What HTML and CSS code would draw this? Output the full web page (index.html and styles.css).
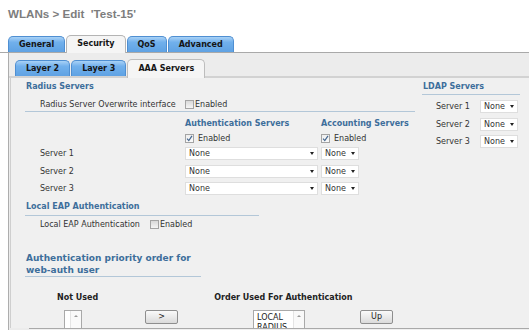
FILE: index.html
```html
<!DOCTYPE html>
<html lang="en">
<head>
    <meta charset="UTF-8">
    <title>WLANs &gt; Edit</title>
    <link rel="stylesheet" href="styles.css">
</head>
<body>
    <div class="page-title">WLANs &gt; Edit &nbsp;'Test-15'</div>

    <div class="tabs">
        <div class="tab">General</div>
        <div class="tab active">Security</div>
        <div class="tab">QoS</div>
        <div class="tab">Advanced</div>
    </div>

    <div class="panel">
        <div class="tabs sub">
            <div class="tab">Layer 2</div>
            <div class="tab">Layer 3</div>
            <div class="tab active">AAA Servers</div>
        </div>

        <div class="subpanel">
            <div class="cols">
                <div class="main">
                    <!-- Radius -->
                    <div class="section radius">
                        <div class="sec-head">Radius Servers</div>
                        <div class="row overwrite">
                            <span class="label wide">Radius Server Overwrite interface</span>
                            <span class="check"></span><span class="check-text tight">Enabled</span>
                        </div>
                    </div>

                    <div class="srv-grid">
                        <div></div>
                        <div class="col-head">Authentication Servers</div>
                        <div class="col-head">Accounting Servers</div>

                        <div></div>
                        <div class="row"><span class="check on"><svg width="7" height="7" viewBox="0 0 7 7"><path d="M1 3.6 L2.8 5.6 L6 0.8" fill="none" stroke="#45678f" stroke-width="1.2"/></svg></span><span class="check-text">Enabled</span></div>
                        <div class="row"><span class="check on"><svg width="7" height="7" viewBox="0 0 7 7"><path d="M1 3.6 L2.8 5.6 L6 0.8" fill="none" stroke="#45678f" stroke-width="1.2"/></svg></span><span class="check-text">Enabled</span></div>

                        <div class="label">Server 1</div>
                        <div class="select big">None</div>
                        <div class="select">None</div>

                        <div class="label">Server 2</div>
                        <div class="select big">None</div>
                        <div class="select">None</div>

                        <div class="label">Server 3</div>
                        <div class="select big">None</div>
                        <div class="select">None</div>
                    </div>

                    <!-- Local EAP -->
                    <div class="section eap">
                        <div class="sec-head">Local EAP Authentication</div>
                    </div>
                    <div class="row eap-row">
                        <span class="label">Local EAP Authentication</span>
                        <span class="check"></span><span class="check-text tight">Enabled</span>
                    </div>

                    <!-- Web auth priority -->
                    <div class="big-head">Authentication priority order for<br>web-auth user</div>

                    <div class="order-heads">
                        <span class="not-used">Not Used</span>
                        <span class="order-used">Order Used For Authentication</span>
                    </div>
                    <div class="order-ctrls">
                        <div class="listbox narrow">
                            <div class="items"></div>
                            <div class="scroll"></div>
                        </div>
                        <button class="btn move">&gt;</button>
                        <div class="listbox used">
                            <div class="items">LOCAL<br>RADIUS</div>
                            <div class="scroll"></div>
                        </div>
                        <button class="btn up">Up</button>
                    </div>
                </div>

                <div class="ldap">
                    <div class="sec-head ldap-head">LDAP Servers</div>
                    <div class="ldap-row"><span class="label">Server 1</span><div class="select">None</div></div>
                    <div class="ldap-row"><span class="label">Server 2</span><div class="select">None</div></div>
                    <div class="ldap-row"><span class="label">Server 3</span><div class="select">None</div></div>
                </div>
            </div>
        </div>
        <div class="frame-bottom"></div>
    </div>
</body>
</html>
```

FILE: styles.css
```css
/* General styles */
body {
    margin: 0;
    width: 529px;
    height: 330px;
    overflow: hidden;
    font-family: "DejaVu Sans", Verdana, sans-serif;
    font-size: 8px;
    color: #333;
    background: #fff;
}

.page-title {
    height: 35px;
    box-sizing: border-box;
    padding: 7px 8px 0;
    font-family: "Liberation Sans", Arial, sans-serif;
    font-weight: bold;
    font-size: 11.6px;
    line-height: 14px;
    color: #7d7d7d;
}

/* Tabs */
.tabs {
    display: flex;
    align-items: flex-end;
    height: 17px;
    padding-left: 8px;
    border-bottom: 1px solid #a9a9a9;
}

.tab {
    height: 15px;
    line-height: 15px;
    padding: 0 10px;
    margin-right: 1px;
    border: 1px solid #4f8fd2;
    border-bottom: none;
    border-radius: 5px 5px 0 0;
    background: linear-gradient(#a9d2f6, #71b0ec 35%, #5fa2e3);
    font-weight: bold;
    color: #151515;
}

.tab.active {
    height: 17px;
    line-height: 16px;
    margin-bottom: -1px;
    border-color: #b4b4b4;
    background: #f5f5f5;
}

.tabs.sub {
    height: 18px;
    padding: 5px 0 0 6px;
    border-bottom: 2px solid #d2d2d2;
}

.tabs.sub .tab.active {
    height: 18px;
    line-height: 17px;
    margin-bottom: -2px;
    border-color: #bdbdbd;
}

/* Panels */
.panel {
    margin-left: 8px;
    border-left: 1px solid #adadad;
    background: #ececec;
}

.subpanel {
    height: 250px;
    overflow: hidden;
    margin-left: 1px;
    border-left: 1px solid #cfcfcf;
    background: #f0f0f0;
}

.frame-bottom {
    height: 3px;
    margin-left: 20px;
    border-top: 1px solid #a9a9a9;
    background: #f0f0f0;
}

.cols {
    display: flex;
    padding: 2px 0 0 14px;
}

.main {
    width: 390px;
}

.ldap {
    width: 98px;
    margin-left: 7px;
}

/* Section headings */
.sec-head {
    height: 13px;
    line-height: 13px;
    padding-left: 1px;
    font-weight: bold;
    color: #3d6e9b;
    white-space: nowrap;
}

.section {
    border-bottom: 1px solid #b3c7d8;
}

.section.eap {
    width: 234px;
    margin-top: 2px;
}

.section.eap .sec-head {
    height: 15px;
}

.ldap-head {
    height: 14px;
    border-bottom: 1px solid #b3c7d8;
}

.row {
    display: flex;
    align-items: center;
    white-space: nowrap;
}

.label {
    color: #333;
    white-space: nowrap;
}

.label.wide {
    width: 145px;
}

.overwrite {
    padding: 4px 0 0 15px;
    height: 14px;
}

/* Checkboxes */
.check {
    display: inline-flex;
    align-items: center;
    justify-content: center;
    width: 9px;
    height: 9px;
    box-sizing: border-box;
    border: 1px solid #a4a4a4;
    background: linear-gradient(#d9d9d9, #f5f5f5);
}

.check.on {
    background: linear-gradient(#eeeeee, #fafafa);
}

.check-text {
    margin-left: 4px;
}

.check-text.tight {
    margin-left: 1px;
}

/* Server grid */
.srv-grid {
    display: grid;
    grid-template-columns: 145px 136px 95px;
    grid-template-rows: 16px 14px 17.5px 17.5px 17.5px;
    align-items: center;
    margin-top: 3px;
    padding-left: 15px;
}

.col-head {
    font-weight: bold;
    color: #3d6e9b;
    white-space: nowrap;
}

.select {
    display: flex;
    align-items: center;
    justify-content: space-between;
    width: 38px;
    height: 13px;
    box-sizing: border-box;
    padding: 0 3px 0 3px;
    border: 1px solid #dedede;
    background: #fff;
    color: #333;
}

.select::after {
    content: "";
    border-left: 2.5px solid transparent;
    border-right: 2.5px solid transparent;
    border-top: 3px solid #222;
}

.select.big {
    width: 133px;
}

/* Local EAP */
.eap-row {
    height: 14px;
    margin-top: 2px;
    padding-left: 15px;
}

.eap-row .label {
    margin-right: 10px;
}

/* Priority order */
.big-head {
    width: 176px;
    margin-top: 20px;
    font-size: 9px;
    line-height: 12px;
    font-weight: bold;
    color: #3d6e9b;
    padding-left: 1px;
    box-sizing: border-box;
    border-bottom: 1px solid #b3c7d8;
}

.order-heads {
    display: flex;
    height: 14px;
    line-height: 14px;
    margin-top: 14px;
    font-weight: bold;
    color: #222;
    white-space: nowrap;
}

.not-used {
    margin-left: 32px;
}

.order-used {
    margin-left: 116px;
}

.order-ctrls {
    display: flex;
    align-items: flex-start;
    margin-top: 5px;
}

.listbox {
    display: flex;
    height: 30px;
    box-sizing: border-box;
    border: 1px solid #a9a9a9;
    background: #fff;
}

.listbox .items {
    flex: 1;
    padding: 2px 0 0 3px;
    line-height: 10px;
    color: #222;
}

.listbox .scroll {
    position: relative;
    width: 10px;
    border-left: 1px solid #e4e4e4;
    background: #f9f9f9;
}

.listbox .scroll::before {
    content: "";
    position: absolute;
    top: 4px;
    left: 3px;
    border-left: 2px solid transparent;
    border-right: 2px solid transparent;
    border-bottom: 2px solid #9a9a9a;
}

.listbox.narrow {
    width: 18px;
    margin-left: 39px;
}

.listbox.used {
    width: 52px;
    margin-left: 75px;
}

.btn {
    width: 33px;
    height: 14px;
    padding: 0;
    border: 1px solid #8e8e8e;
    border-radius: 2px;
    background: linear-gradient(#fafafa, #dadada);
    font-family: "DejaVu Sans", Verdana, sans-serif;
    font-size: 8px;
    color: #222;
}

.btn.move {
    margin-left: 63px;
}

.btn.up {
    margin-left: 55px;
}

/* LDAP */
.ldap-row {
    display: flex;
    align-items: center;
    height: 12px;
    margin-top: 5.5px;
    padding-left: 14px;
}

.ldap-row .label {
    width: 44px;
}

.ldap-row:first-of-type {
    margin-top: 5px;
}
```
